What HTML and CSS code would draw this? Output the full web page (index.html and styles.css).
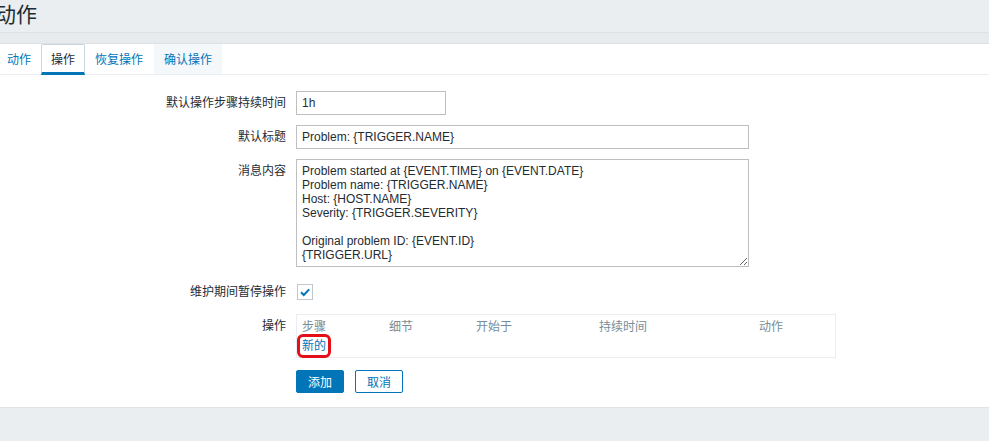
FILE: index.html
```html
<!DOCTYPE html>
<html lang="zh-CN">
<head>
    <meta charset="UTF-8"/>
    <title>动作</title>
    <link rel="stylesheet" href="styles.css">
</head>
<body>
<header class="page-header">
    <h1>动作</h1>
</header>
<div class="header-strip"></div>
<main class="page-body">
    <ul class="tabs">
        <li class="tab">动作</li>
        <li class="tab tab-active">操作</li>
        <li class="tab">恢复操作</li>
        <li class="tab tab-hover">确认操作</li>
    </ul>
    <form class="action-form">
        <div class="form-row">
            <label class="form-label" for="stepDuration">默认操作步骤持续时间</label>
            <div class="form-field">
                <input type="text" id="stepDuration" class="input-short" value="1h"/>
            </div>
        </div>
        <div class="form-row">
            <label class="form-label" for="subject">默认标题</label>
            <div class="form-field">
                <input type="text" id="subject" class="input-wide" value="Problem: {TRIGGER.NAME}"/>
            </div>
        </div>
        <div class="form-row row-textarea">
            <label class="form-label" for="message">消息内容</label>
            <div class="form-field">
<textarea id="message" class="input-wide message-box">Problem started at {EVENT.TIME} on {EVENT.DATE}
Problem name: {TRIGGER.NAME}
Host: {HOST.NAME}
Severity: {TRIGGER.SEVERITY}

Original problem ID: {EVENT.ID}
{TRIGGER.URL}</textarea>
            </div>
        </div>
        <div class="form-row row-check">
            <label class="form-label">维护期间暂停操作</label>
            <div class="form-field">
                <span class="checkbox">
                    <svg width="16" height="16" viewBox="0 0 16 16">
                        <path d="M4 8.2 L6.8 11 L12.2 5.4" fill="none" stroke="#0275b8" stroke-width="2"/>
                    </svg>
                </span>
            </div>
        </div>
        <div class="form-row row-ops">
            <label class="form-label">操作</label>
            <div class="form-field">
                <div class="ops-table">
                    <div class="ops-head">
                        <span>步骤</span>
                        <span>细节</span>
                        <span>开始于</span>
                        <span>持续时间</span>
                        <span>动作</span>
                    </div>
                    <div class="ops-body">
                        <a class="new-link" href="#">新的</a>
                    </div>
                </div>
            </div>
        </div>
        <div class="form-row row-buttons">
            <div class="form-label"></div>
            <div class="form-field buttons">
                <button type="button" class="btn btn-primary">添加</button>
                <button type="button" class="btn btn-alt">取消</button>
            </div>
        </div>
    </form>
</main>
<footer class="page-footer"></footer>
</body>
</html>
```

FILE: styles.css
```css
* {
    margin: 0;
    padding: 0;
    box-sizing: border-box;
}

html body {
    font-size: 12px;
    font-family: "Liberation Sans", "Noto Sans CJK SC", sans-serif;
    color: #1f2c33;
    background-color: #ebeef0;
    overflow: hidden;
}

.page-header {
    height: 33px;
    background-color: #ebeef0;
    border-bottom: 1px solid #dde1e4;
    overflow: hidden;
}

.page-header h1 {
    font-size: 21px;
    font-weight: normal;
    line-height: 30px;
    margin-left: -5px;
    color: #1f2c33;
}

.header-strip {
    height: 11px;
    background-color: #e8ebed;
    border-bottom: 1px solid #dde1e4;
}

.page-body {
    background-color: #fff;
    border-bottom: 1px solid #dfe3e5;
}

.tabs {
    display: flex;
    list-style: none;
    height: 31px;
    border-bottom: 1px solid #ebeef0;
}

.tab {
    padding: 3px 10px 0;
    line-height: 27px;
    color: #0275b8;
    white-space: nowrap;
}

.tab:first-child {
    margin-left: -3px;
}

.tab-active {
    color: #1f2c33;
    border: 1px solid #c8d6e0;
    border-bottom: 3px solid #0275b8;
    border-radius: 2px 2px 0 0;
    line-height: 26px;
    padding: 2px 9px 0;
    height: 31px;
}

.tab-hover {
    background-color: #f4f8fb;
    margin-left: 1px;
}

.action-form {
    padding: 16px 0 14px;
}

.form-row {
    display: flex;
    align-items: flex-start;
    margin-bottom: 10px;
}

.form-label {
    width: 296px;
    padding-right: 10px;
    text-align: right;
    line-height: 24px;
    white-space: nowrap;
}

.form-field {
    flex: none;
}

input[type="text"],
textarea {
    font-family: "Liberation Sans", "Noto Sans CJK SC", sans-serif;
    font-size: 12px;
    color: #1f2c33;
    border: 1px solid #bfbfbf;
    background-color: #fff;
    outline: none;
}

input[type="text"] {
    height: 24px;
    padding: 0 5px;
}

.input-short {
    width: 150px;
}

.input-wide {
    width: 453px;
}

.message-box {
    display: block;
    height: 108px;
    padding: 4px 5px;
    line-height: 14px;
    resize: both;
}

.row-textarea {
    margin-bottom: 13px;
}

.row-check {
    margin-bottom: 10px;
}

.checkbox {
    display: block;
    width: 16px;
    height: 16px;
    margin-top: 4px;
    margin-left: 1px;
    border: 1px solid #bfc8cc;
    background-color: #fff;
}

.checkbox svg {
    display: block;
    margin: -1px 0 0 -1px;
}

.ops-table {
    width: 540px;
    height: 44px;
    border: 1px solid #ebeef0;
    padding: 0 5px;
}

.ops-head {
    display: grid;
    grid-template-columns: 87px 87px 123px 160px 1fr;
    line-height: 22px;
    padding-top: 1px;
    color: #768d99;
}

.ops-body {
    line-height: 16px;
}

.new-link {
    color: #0275b8;
    text-decoration: none;
    outline: 3px solid #e3101a;
    outline-offset: 2px;
    border-radius: 1px;
}

.row-buttons {
    margin-top: 12px;
    margin-bottom: 0;
}

.buttons {
    display: flex;
    gap: 11px;
}

.btn {
    height: 23px;
    width: 48px;
    font-family: "Liberation Sans", "Noto Sans CJK SC", sans-serif;
    font-size: 12px;
    border-radius: 2px;
    border: 1px solid #0275b8;
    cursor: pointer;
}

.btn-primary {
    background-color: #0275b8;
    color: #fff;
}

.btn-alt {
    background-color: #fff;
    color: #0275b8;
}

.page-footer {
    height: 40px;
    background-color: #ebeef0;
}
```
